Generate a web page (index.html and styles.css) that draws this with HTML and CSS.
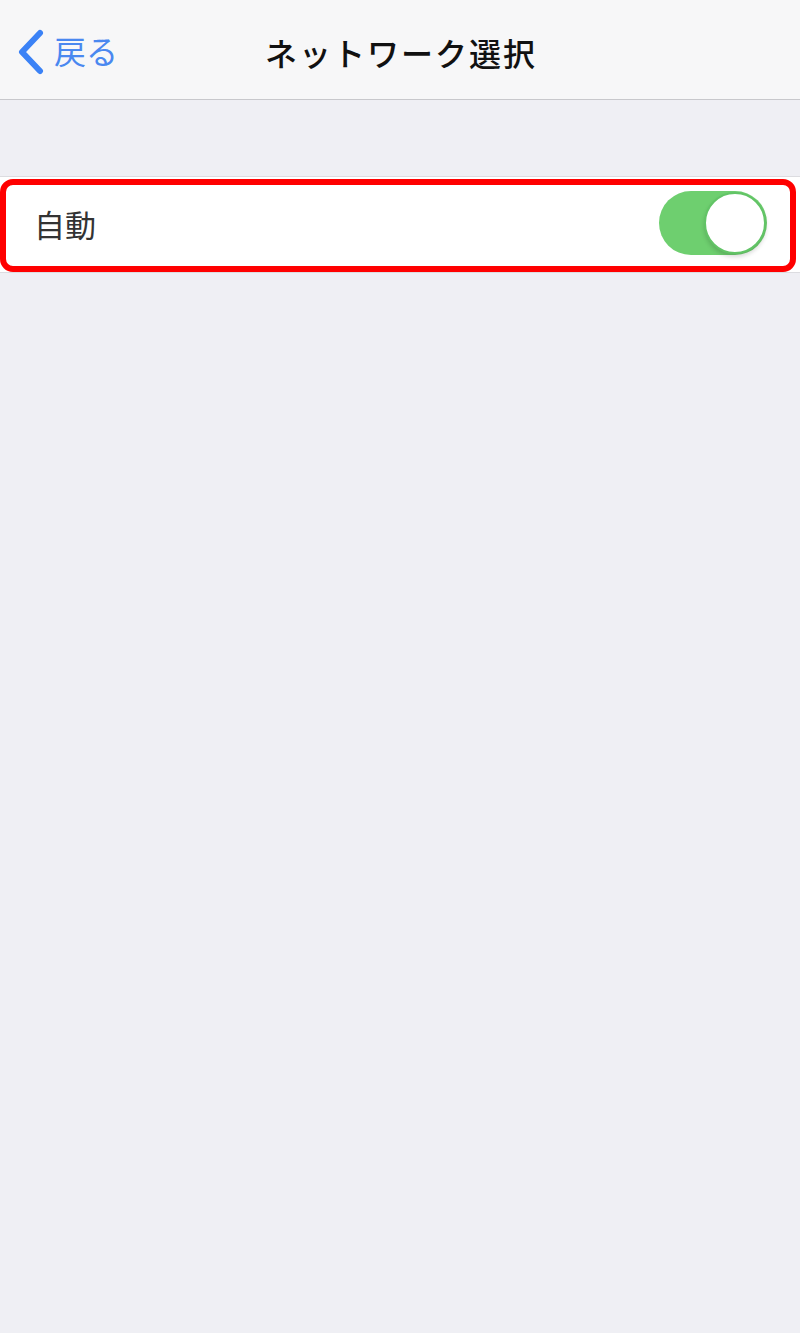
FILE: index.html
```html
<!DOCTYPE html>
<html lang="ja">
<head>
<meta charset="utf-8">
<link rel="stylesheet" href="styles.css">
</head>
<body>
<header class="navbar">
  <a class="back">
    <svg class="chevron" width="30" height="46" viewBox="0 0 30 46"><path d="M25 4 L7 23 L25 42" fill="none" stroke="#3b82f6" stroke-width="6" stroke-linecap="round" stroke-linejoin="round"/></svg>
    <span class="back-label">戻る</span>
  </a>
  <h1 class="title">ネットワーク選択</h1>
</header>
<main class="content">
  <section class="group">
    <div class="row">
      <span class="row-label">自動</span>
      <span class="toggle on"><span class="knob"></span></span>
    </div>
    <div class="highlight"></div>
  </section>
</main>
</body>
</html>
```
FILE: styles.css
```css
html, body {
  margin: 0;
  padding: 0;
  background: #efeff4;
  font-family: "Noto Sans CJK JP", "Noto Sans", sans-serif;
}
.navbar {
  position: relative;
  height: 100px;
  background: #f7f7f8;
  border-bottom: 1px solid #c8c8cc;
  box-sizing: border-box;
  display: flex;
  align-items: center;
  justify-content: center;
}
.back {
  position: absolute;
  left: 15px;
  top: 29px;
  display: flex;
  align-items: center;
  gap: 9px;
}
.chevron { display: block; }
.back-label {
  color: #4a88f0;
  font-size: 32px;
  line-height: 46px;
  margin-top: -4px;
}
.title {
  margin: 0;
  font-size: 32px;
  font-weight: 500;
  color: #111;
  letter-spacing: 2px;
  line-height: 40px;
  margin-top: 4px;
  margin-right: -2px;
}
.content {
  padding-top: 76px;
}
.group {
  position: relative;
  background: #fff;
  border-top: 1px solid #dcdce0;
  border-bottom: 1px solid #dcdce0;
}
.row {
  height: 95px;
  display: flex;
  align-items: center;
  justify-content: space-between;
  padding: 0 33px 0 34px;
}
.row-label {
  font-size: 31px;
  color: #333;
  margin-top: -2px;
}
.toggle {
  position: relative;
  width: 108px;
  height: 64px;
  border-radius: 32px;
  background: #6ecf6f;
  display: block;
  margin-top: -4px;
}
.knob {
  position: absolute;
  right: 1px;
  top: 1px;
  width: 58px;
  height: 58px;
  border-radius: 50%;
  background: #fff;
  border: 2px solid #62c466;
  box-shadow: 0 3px 4px rgba(0,0,0,0.15);
}
.highlight {
  position: absolute;
  left: 0;
  top: 2px;
  width: 796px;
  height: 93px;
  box-sizing: border-box;
  border: 6px solid #ff0000;
  border-radius: 13px;
  pointer-events: none;
}
```
